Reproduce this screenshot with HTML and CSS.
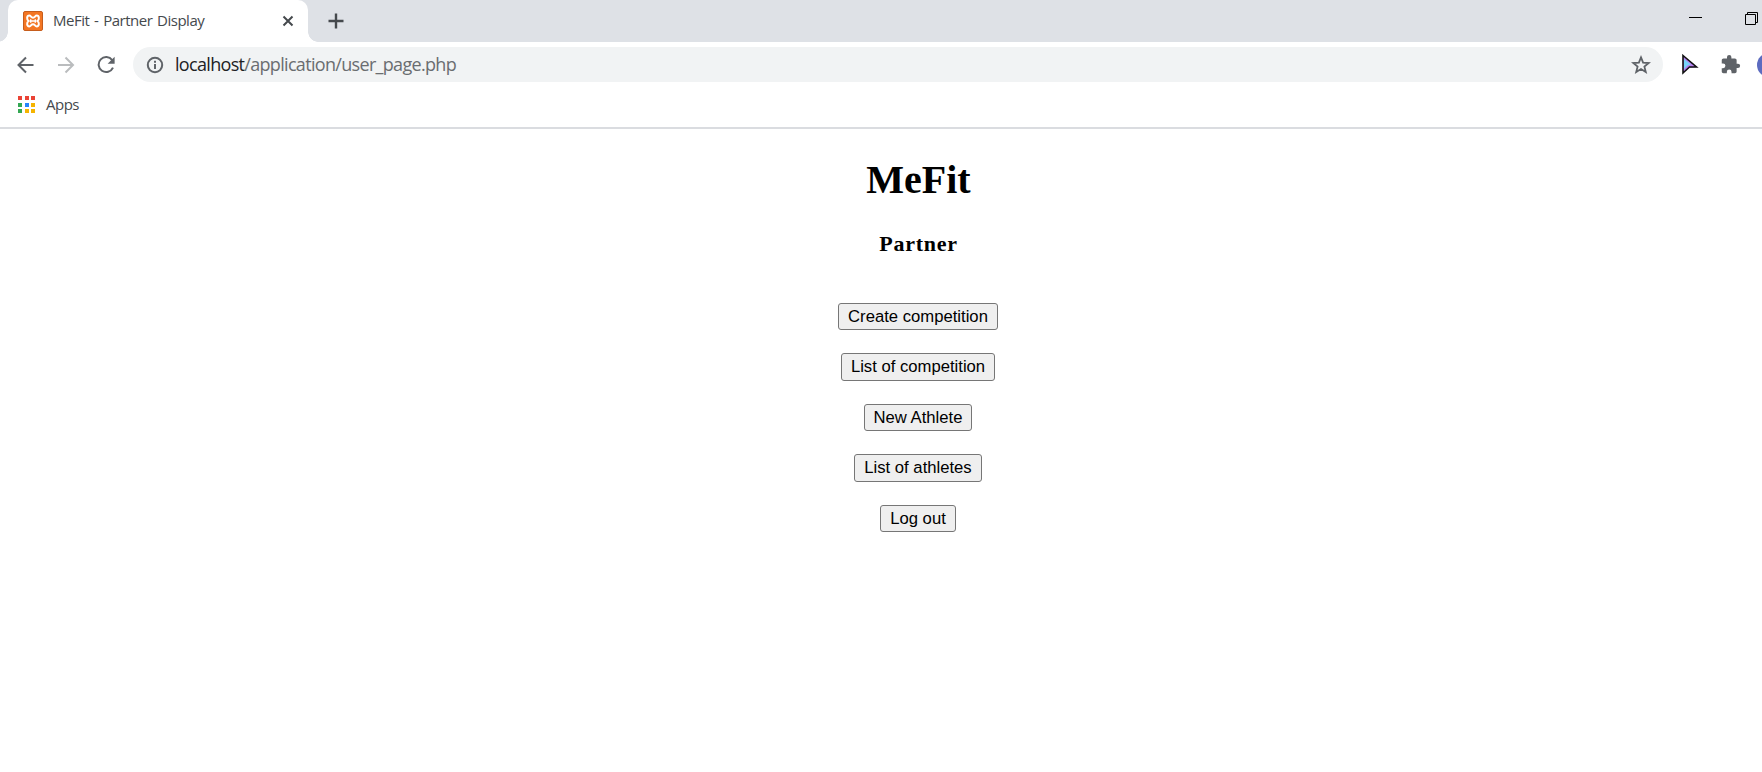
FILE: index.html
```html
<!DOCTYPE html>
<html lang="en">
<head>
<meta charset="utf-8">
<title>MeFit - Partner Display</title>
<link rel="stylesheet" href="styles.css">
</head>
<body>
<header class="browser">
  <div class="tabstrip">
    <div class="tab">
      <svg class="favicon" width="20" height="20" viewBox="0 0 20 20"><rect x=".5" y=".5" width="19" height="19" rx="1.5" fill="#f37623" stroke="#c65d1d"/><path d="M6.3 4.6C3.6 4.6 3.5 8.7 5.6 10 3.5 11.3 3.6 15.4 6.3 15.4 8 15.4 8 13.3 10 13.3S12 15.4 13.7 15.4C16.4 15.4 16.5 11.3 14.4 10 16.5 8.7 16.4 4.6 13.7 4.6 12 4.6 12 6.7 10 6.7S8 4.6 6.3 4.6Z" fill="none" stroke="#fff" stroke-width="2"/><path d="M7.2 10h5.6M7.7 8.3v3.4M12.3 8.3v3.4" stroke="#fff" stroke-width="1.4"/></svg>
      <span class="tab-title">MeFit - Partner Display</span>
      <svg class="close" width="12" height="12" viewBox="0 0 12 12"><path d="M1.500 1.500l9 9M10.500 1.500l-9 9" stroke="#45494d" stroke-width="2"/></svg>
    </div>
    <svg class="newtab" width="16" height="16" viewBox="0 0 16 16"><path d="M8 .5v15M.5 8h15" stroke="#45494d" stroke-width="2.400"/></svg>
    <svg class="minimize" width="13" height="1" viewBox="0 0 13 1"><path d="M0 .5h13" stroke="#000"/></svg>
    <svg class="restore" width="13" height="13" viewBox="0 0 13 13"><path d="M.5 2.500h10v10H.5zM2.500 2.500v-2h10v10h-2" fill="none" stroke="#000"/></svg>
  </div>
  <div class="toolbar">
    <svg class="back" width="18" height="18" viewBox="0 0 18 18"><path d="M16.500 9H2M9 1.500L1.500 9 9 16.500" fill="none" stroke="#5f6368" stroke-width="2"/></svg>
    <svg class="forward" width="18" height="18" viewBox="0 0 18 18"><path d="M1 9h15M8.500 1.500L16 9 8.500 16.500" fill="none" stroke="#babcbe" stroke-width="2"/></svg>
    <svg class="reload" width="18" height="18" viewBox="0 0 18 18"><path d="M15.200 4.100A7.500 7.500 0 1 0 16 11.600" fill="none" stroke="#5f6368" stroke-width="2"/><path d="M17.600.8v7h-7z" fill="#5f6368"/></svg>
    <div class="omnibox">
      <svg width="18" height="18" viewBox="0 0 18 18"><circle cx="9" cy="9" r="7.200" fill="none" stroke="#5f6368" stroke-width="2"/><path d="M9 8v5M9 4.700v2" stroke="#5f6368" stroke-width="2"/></svg>
      <span class="url"><span class="host">localhost</span>/application/user_page.php</span>
      <svg class="star" width="20" height="20" viewBox="0 0 20 20"><path d="M10 2.400l2.100 5.200 5.600.4-4.300 3.600 1.400 5.500-4.800-3-4.800 3 1.400-5.500L2.300 8l5.600-.4z" fill="none" stroke="#5f6368" stroke-width="1.800"/></svg>
    </div>
    <svg class="pointer" width="18" height="21" viewBox="0 0 18 21"><path d="M2 2l14 11-8 1-6 5z" fill="#b77cf0"/><path d="M3 5l7 5.500-3.500 1L3 15z" fill="#76d3f8"/><path d="M2 1.500l13.500 11.500H8.500L2 19z" fill="none" stroke="#111" stroke-width="1.600"/></svg>
    <svg class="puzzle" width="21" height="21" viewBox="0 0 24 24"><path d="M20.500 11H19V7c0-1.100-.9-2-2-2h-4V3.500a2.500 2.500 0 0 0-5 0V5H4c-1.100 0-2 .9-2 2v3.800h1.500a2.700 2.700 0 0 1 0 5.400H2V20c0 1.100.9 2 2 2h3.800v-1.500a2.700 2.700 0 0 1 5.400 0V22H17c1.100 0 2-.9 2-2v-4h1.500a2.500 2.500 0 0 0 0-5z" fill="#5f6368"/></svg>
    <div class="avatar"></div>
  </div>
  <div class="bookmarks">
    <div class="apps-grid"><i class="r"></i><i class="r"></i><i class="r"></i><i class="g"></i><i class="b"></i><i class="y"></i><i class="g"></i><i class="y"></i><i class="y"></i></div>
    <span class="apps-label">Apps</span>
  </div>
</header>
<main class="page">
  <h1>MeFit</h1>
  <h3>Partner</h3>
  <div class="actions">
    <button class="create">Create competition</button>
    <button class="competitions">List of competition</button>
    <button class="new">New Athlete</button>
    <button class="athletes">List of athletes</button>
    <button class="logout">Log out</button>
  </div>
</main>
</body>
</html>
```
FILE: styles.css
```css
* { box-sizing: border-box; }
body { margin: 0; width: 1762px; height: 772px; overflow: hidden; background: #fff; font-family: "Liberation Serif", serif; }
svg { display: block; flex: none; }
.browser { height: 129px; border-bottom: 2px solid #dadce0; font-family: "Open Sans", sans-serif; overflow: hidden; }
.tabstrip { display: flex; height: 42px; background: #dee1e6; padding-left: 8px; }
.tab { position: relative; display: flex; align-items: center; width: 300px; height: 42px; background: #fff; border-radius: 10px 10px 0 0; padding: 0 14px 0 15px; flex: none; }
.tab::before, .tab::after { content: ""; position: absolute; bottom: 0; width: 10px; height: 10px; }
.tab::before { left: -10px; background: radial-gradient(circle at 0 0, transparent 9.5px, #fff 10px); }
.tab::after { right: -10px; background: radial-gradient(circle at 100% 0, transparent 9.5px, #fff 10px); }
.tab-title { margin-left: 10px; padding-bottom: 2px; font-size: 15px; letter-spacing: -.5px; word-spacing: 1.4px; color: #45494d; white-space: nowrap; }
.close { margin-left: auto; }
.newtab { margin: 13px 0 0 20px; }
.minimize { margin: 17px 0 0 auto; }
.restore { margin: 12px 4px 0 43px; }
.toolbar { display: flex; align-items: center; height: 45px; }
.back { margin-left: 17px; }
.forward { margin-left: 22px; }
.reload { margin-left: 22px; }
.omnibox { display: flex; align-items: center; width: 1530px; height: 35px; margin-left: 18px; padding: 0 12px 0 13px; background: #f1f3f4; border-radius: 18px; flex: none; }
.url { margin-left: 11px; padding-bottom: 2px; font-size: 18px; letter-spacing: -.68px; color: #6a6d70; white-space: nowrap; }
.host { color: #202124; }
.star { margin-left: auto; }
.pointer { margin-left: 18px; }
.puzzle { margin-left: 21px; }
.avatar { width: 30px; height: 24px; margin-left: 16px; border-radius: 12px 0 0 12px; background: #5c6bc0; flex: none; }
.bookmarks { display: flex; align-items: center; height: 35px; padding-left: 18px; }
.apps-grid { display: grid; grid-template-columns: repeat(3, 4px); grid-auto-rows: 4px; gap: 2.5px; }
.r { background: #ea4335; }
.g { background: #34a853; }
.b { background: #2684fc; }
.y { background: #f5b400; }
.apps-label { margin-left: 11px; padding-bottom: 2px; font-size: 15px; letter-spacing: -.5px; color: #45494d; }
.page { display: flex; flex-direction: column; align-items: center; padding-left: 75px; }
h1 { margin: 28px 0 0; font-size: 40px; line-height: 46px; }
h3 { margin: 27px 0 0; font-size: 22px; letter-spacing: .75px; line-height: 28px; }
.actions { display: flex; flex-direction: column; align-items: center; margin: 45px 1px 0 0; }
button { height: 27px; margin-bottom: 23px; padding: 0; border: 1px solid #767676; border-radius: 3px; background: #efefef; color: #000; font: 16.667px "Liberation Sans", Arial, sans-serif; white-space: nowrap; }
.create { width: 160px; }
.competitions { width: 154px; height: 28px; }
.new { width: 108px; }
.athletes { width: 128px; height: 28px; }
.logout { width: 76px; }
```
